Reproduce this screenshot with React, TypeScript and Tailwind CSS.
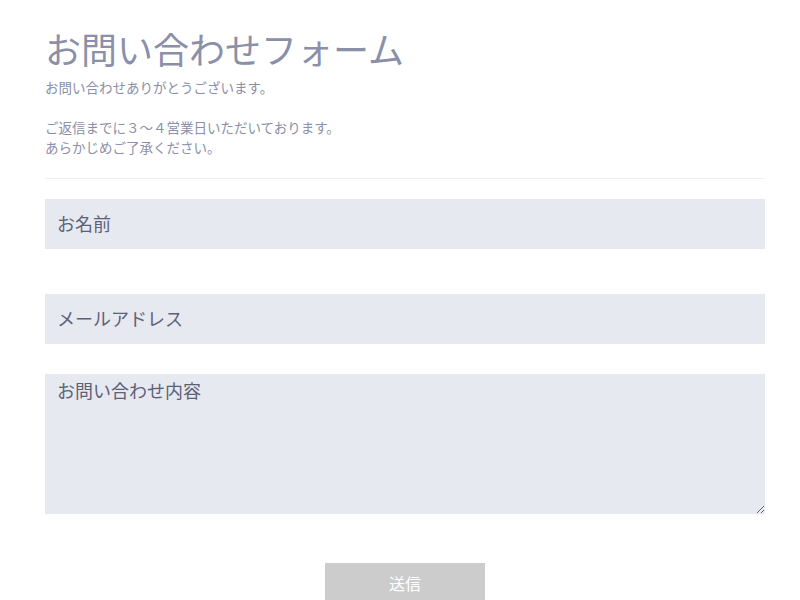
import React from 'react';

const font = { fontFamily: '"Noto Sans CJK JP", "Noto Sans", sans-serif' };

const App: React.FC = () => {
  return (
    <div className="min-h-screen bg-white" style={font}>
      <div className="ml-[45px] w-[720px] pt-[22px]">
        {/* Heading */}
        <h1 className="text-[36px] leading-[52px] font-normal text-[#8b90a8]">お問い合わせフォーム</h1>
        <p className="mt-[3px] text-[13.5px] leading-[20px] text-[#8b90a8]">
          お問い合わせありがとうございます。
          <br />
          <br />
          ご返信までに３～４営業日いただいております。
          <br />
          あらかじめご了承ください。
        </p>
        <hr className="mt-[21px] border-0 border-t border-[#eeeeee]" />

        {/* Form */}
        <form className="flex flex-col" onSubmit={(e) => e.preventDefault()}>
          <input
            type="text"
            placeholder="お名前"
            className="mt-[20px] h-[50px] w-full bg-[#e6e9f0] px-[12px] pb-[3px] text-[18px] text-[#5c6178] placeholder:text-[#5c6178] outline-none"
          />
          <input
            type="email"
            placeholder="メールアドレス"
            className="mt-[45px] h-[50px] w-full bg-[#e6e9f0] px-[12px] pb-[3px] text-[18px] text-[#5c6178] placeholder:text-[#5c6178] outline-none"
          />
          <textarea
            placeholder="お問い合わせ内容"
            className="mt-[30px] h-[140px] w-full bg-[#e6e9f0] px-[12px] pt-[4px] text-[18px] leading-[24px] text-[#5c6178] placeholder:text-[#5c6178] outline-none"
          />
          <button
            type="submit"
            className="mx-auto mt-[49px] h-[40px] w-[160px] bg-[#cccccc] text-[16px] text-white"
          >
            送信
          </button>
        </form>
      </div>
    </div>
  );
};

export default App;
